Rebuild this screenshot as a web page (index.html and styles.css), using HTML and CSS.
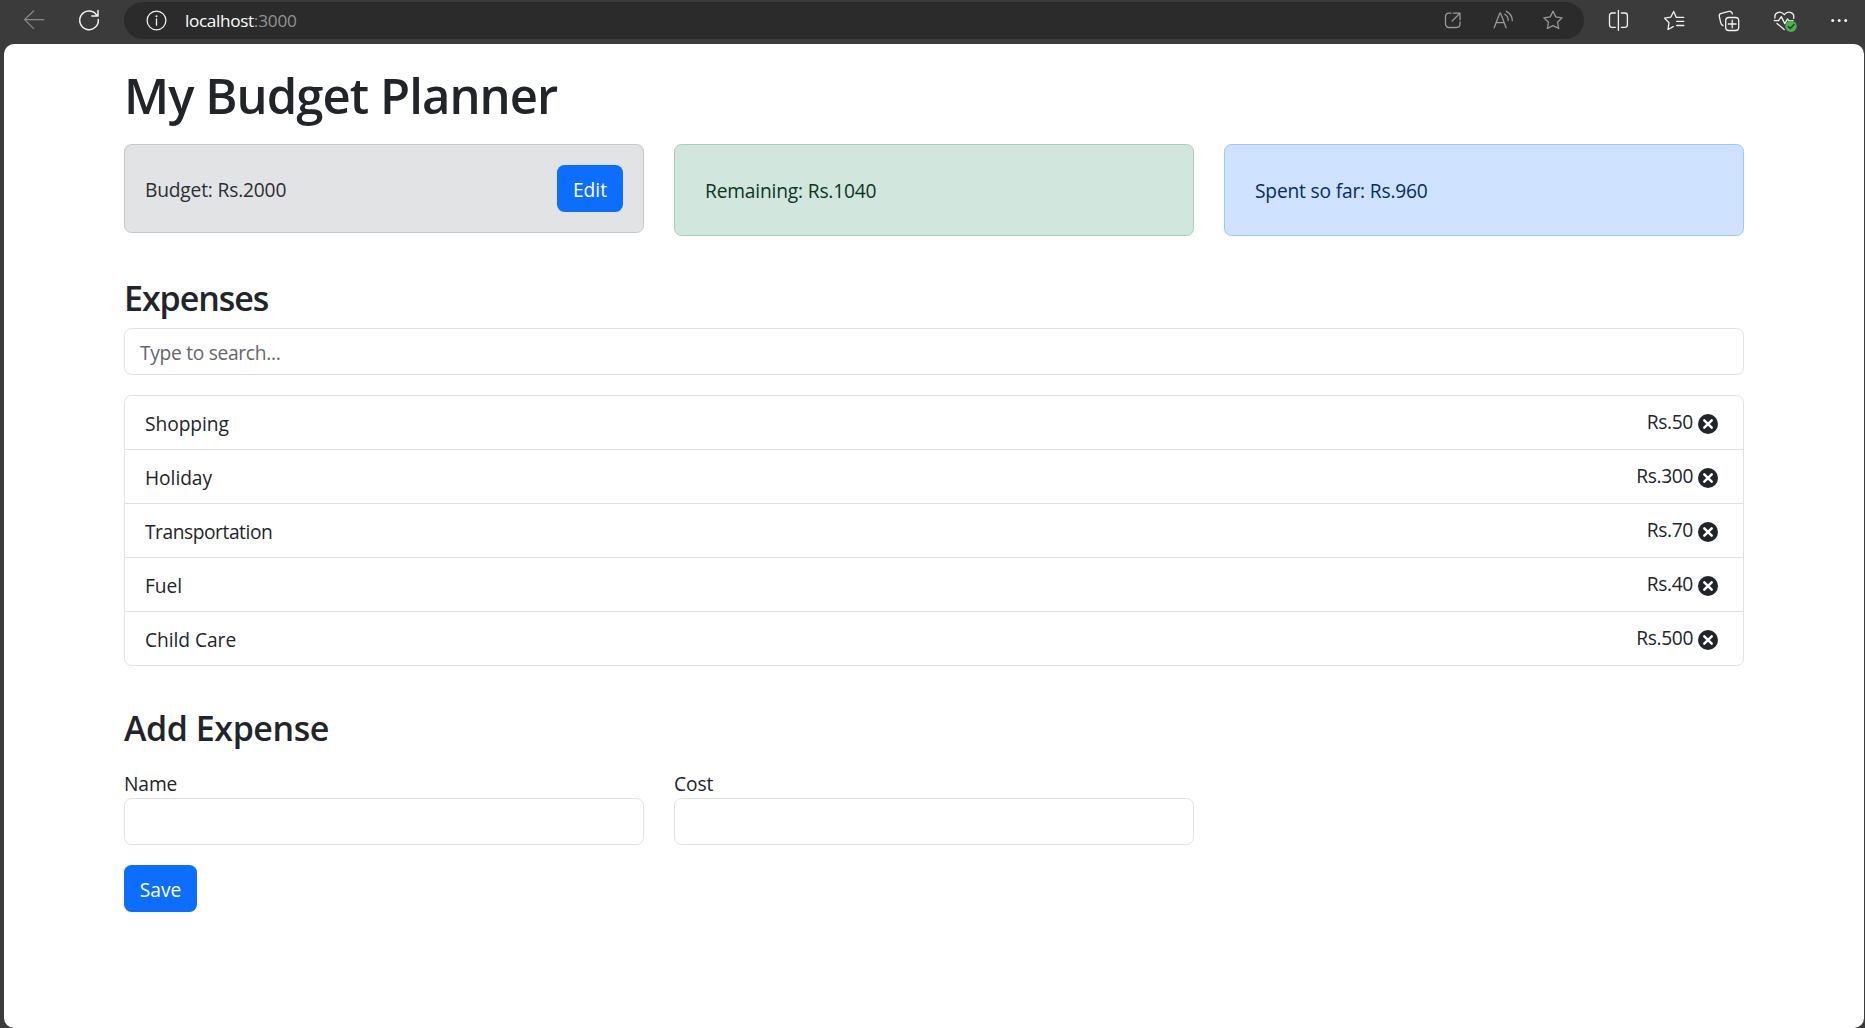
FILE: index.html
```html
<!DOCTYPE html>
<html lang="en">
<head>
<meta charset="utf-8">
<title>My Budget Planner</title>
<link rel="stylesheet" href="styles.css">
</head>
<body>
<svg class="defs" aria-hidden="true">
  <symbol id="remove" viewBox="0 0 20 20">
    <circle cx="10" cy="10" r="10" fill="#212529"/>
    <path d="M6.3 6.3 13.7 13.7M13.7 6.3 6.3 13.7" stroke="#fff" stroke-width="2.5" stroke-linecap="round"/>
  </symbol>
</svg>
<header class="toolbar">
  <svg class="icon back" viewBox="0 0 24 24"><path d="M21.8 11.6H2.6M11.5 3 2.6 11.6l8.9 8.8"/></svg>
  <svg class="icon refresh" viewBox="0 0 24 24"><path d="M21.3 11.4A9.3 9.3 0 1 1 19.2 6.4L20.7 8M21 2.4V8.1H14.8"/></svg>
  <div class="address">
    <svg class="icon info" viewBox="0 0 24 24"><circle cx="12.5" cy="12.5" r="9.4"/><path d="M12.5 11v6.2"/><circle class="dot" cx="12.5" cy="8.2" r="1"/></svg>
    <div class="url"><span class="host">localhost</span><span class="port">:3000</span></div>
    <div class="address-actions">
      <svg class="icon" viewBox="0 0 24 24"><path d="M10 5.1H8A3.4 3.4 0 0 0 4.5 8.5v7.6A3.4 3.4 0 0 0 7.9 19.5H15.6A3.4 3.4 0 0 0 19 16.1V14M12.3 5.1H19V11.8M19 5.1 11.2 13"/></svg>
      <svg class="icon" viewBox="0 0 24 24"><path d="M3.2 19.8 8.7 5.2h.9L15.1 19.8M5.3 14.6h7.7M13.7 6.3a7 7 0 0 1 3.5 6.2M15.3 3.3a10.7 10.7 0 0 1 6 9.2"/></svg>
      <svg class="icon" viewBox="0 0 24 24"><path d="M12 3.2 14.8 8.9 21.1 9.8 16.5 14.2 17.7 20.5 12 17.6 6.4 20.5 7.5 14.2 2.9 9.8 9.2 8.9Z"/></svg>
    </div>
  </div>
  <div class="tools">
    <svg class="icon" viewBox="0 0 24 24"><path d="M8.3 5H5A2.5 2.5 0 0 0 2.5 7.5v9.3A2.5 2.5 0 0 0 5 19.3h3.3M14.3 5h3.6a2.5 2.5 0 0 1 2.5 2.5v9.3a2.5 2.5 0 0 1-2.5 2.5h-3.6M11.4 2.3v20"/></svg>
    <svg class="icon" viewBox="0 0 24 24"><path d="M21.8 9.3H14.2L11.7 3.5 8.7 9.2 2.5 10.1 7 14.7 6 21.5 11.3 18.6M14.7 13.4h7.1M14.7 17.5h7.1"/></svg>
    <svg class="icon" viewBox="0 0 24 24"><path d="M6 17.7C4.5 17.1 4 16 3.7 14.7L2.3 8.5C2 6.7 2.7 5.7 4.2 5.3L12 3.4c1.8-.4 2.9.3 3.4 2.4"/><rect x="8.7" y="9.5" width="13" height="13" rx="3"/><path d="M15.2 12.2v7.6M11.4 16H19"/></svg>
    <svg class="icon health" viewBox="0 0 24 24"><path d="M1 10C-.2 4.5 6.4 2 10.3 6.7 14.2 2 21 4.5 19.6 10.3M.2 12.6h4.3l2.8-4 3.5 7 2.7-4.7 1.5 1.7H19M3 15.4l7.2 6.1"/><circle class="badge" cx="17" cy="18.3" r="5.7"/><path class="check" d="m14.2 18.5 2 2 3.8-3.9"/></svg>
    <svg class="icon more" viewBox="0 0 24 24"><circle class="dot" cx="5.7" cy="12.5" r="1.5"/><circle class="dot" cx="12.2" cy="12.5" r="1.5"/><circle class="dot" cx="18.7" cy="12.5" r="1.5"/></svg>
  </div>
</header>
<main class="page">
  <div class="container">
    <h1 class="title">My Budget Planner</h1>
    <section class="columns summary">
      <div class="alert alert-secondary"><span class="budget">Budget: Rs.2000</span><button class="btn edit" type="button">Edit</button></div>
      <div class="alert alert-success"><span>Remaining: Rs.1040</span></div>
      <div class="alert alert-primary"><span>Spent so far: Rs.960</span></div>
    </section>
    <h3 class="heading expenses-heading">Expenses</h3>
    <input class="field search" type="text" placeholder="Type to search...">
    <ul class="list">
      <li class="item"><span class="name">Shopping</span><span class="amount">Rs.50<svg class="remove"><use href="#remove"/></svg></span></li>
      <li class="item"><span class="name">Holiday</span><span class="amount">Rs.300<svg class="remove"><use href="#remove"/></svg></span></li>
      <li class="item"><span class="name tight">Transportation</span><span class="amount">Rs.70<svg class="remove"><use href="#remove"/></svg></span></li>
      <li class="item"><span class="name">Fuel</span><span class="amount">Rs.40<svg class="remove"><use href="#remove"/></svg></span></li>
      <li class="item"><span class="name">Child Care</span><span class="amount">Rs.500<svg class="remove"><use href="#remove"/></svg></span></li>
    </ul>
    <h3 class="heading add-heading">Add Expense</h3>
    <form class="form">
      <div class="columns">
        <div class="group"><label class="label" for="name">Name</label><input class="field" id="name" type="text"></div>
        <div class="group"><label class="label" for="cost">Cost</label><input class="field" id="cost" type="text"></div>
      </div>
      <button class="btn save" type="button">Save</button>
    </form>
  </div>
</main>
</body>
</html>
```
FILE: styles.css
```css
* { box-sizing: border-box; }

body {
  display: flex;
  flex-direction: column;
  height: 100vh;
  margin: 0;
  overflow: hidden;
  background: #3b3b3b;
  color: #212529;
  font: 400 19.2px/30px "Open Sans", "Noto Sans", sans-serif;
}

.defs { display: none; }

/* Browser toolbar */
.toolbar {
  display: flex;
  align-items: flex-start;
  flex: none;
  height: 44px;
  padding: 2px 14px 0 22px;
}

.icon {
  display: block;
  flex: none;
  width: 24px;
  height: 24px;
  margin-top: 6px;
  fill: none;
  stroke: #f2f2f2;
  stroke-width: 1.3;
  stroke-linejoin: round;
  stroke-linecap: round;
}

.icon .dot { fill: #f2f2f2; stroke: none; }
.back { stroke: #8a8a8a; }
.refresh { margin-left: 31px; stroke-width: 1.5; }

.address {
  display: flex;
  align-items: flex-start;
  width: 1460px;
  height: 37px;
  margin-left: 23px;
  padding: 0 19px 0 20px;
  border-radius: 19px;
  background: #2b2b2b;
}

.url {
  margin-left: 17px;
  padding-top: 4px;
  font-size: 17.2px;
  letter-spacing: -0.35px;
}

.host { color: #fff; }
.port { color: #929292; letter-spacing: -0.2px; }

.address-actions {
  display: flex;
  gap: 26px;
  margin-left: auto;
}

.address-actions .icon { stroke: #999; }

.tools {
  display: flex;
  gap: 31px;
  margin-left: 23px;
}

.health { margin-left: 2px; overflow: visible; }
.more { margin-left: -2px; }
.health .badge { fill: #4caf50; stroke: none; }
.health .check { stroke: #23402a; stroke-width: 1.5; }

/* Page */
.page {
  flex: 1;
  margin: 0 1px 0 4px;
  border-radius: 10px;
  background: #fff;
}

.container {
  width: 1620px;
  margin: 0 auto;
  padding-top: 20px;
}

.title {
  height: 60px;
  margin: 0 0 20px;
  font-size: 49px;
  font-weight: 580;
  line-height: 62px;
  letter-spacing: -0.95px;
}

.heading {
  height: 42px;
  font-size: 34px;
  font-weight: 560;
  line-height: 42px;
}

.columns {
  display: grid;
  grid-template-columns: repeat(3, 520px);
  gap: 30px;
  align-items: start;
}

.alert {
  padding: 31px 30px 29px;
  border: 1px solid;
  border-radius: 7.5px;
  letter-spacing: -0.18px;
}

.alert-secondary {
  display: flex;
  align-items: center;
  justify-content: space-between;
  padding: 20px;
  border-color: #c4c8cb;
  background: #e2e3e5;
  color: #2b2f32;
}

.budget { padding-top: 2px; }

.alert-success { border-color: #a3cfbb; background: #d1e7dd; color: #0a3622; }
.alert-primary { border-color: #9ec5fe; background: #cfe2ff; color: #052c65; }

.btn {
  height: 47px;
  padding: 2px 0 0;
  border: 0;
  border-radius: 7.5px;
  background: #0d6efd;
  color: #fff;
  font: inherit;
}

.edit { width: 66px; }
.save { width: 73px; margin-top: 20px; }

.expenses-heading {
  margin: 41px 0 9px;
  letter-spacing: -1.05px;
}

.field {
  display: block;
  width: 100%;
  height: 47px;
  padding: 2px 15px 0;
  border: 1px solid #dee2e6;
  border-radius: 7.5px;
  background: #fff;
  color: #212529;
  font: inherit;
}

.search { letter-spacing: -0.3px; }
.field::placeholder { color: #62676c; opacity: 1; }

.list {
  margin: 20px 0 0;
  padding: 0;
  border: 1px solid #dee2e6;
  border-radius: 7.5px;
  list-style: none;
}

.item {
  display: flex;
  align-items: flex-start;
  justify-content: space-between;
  height: 54px;
  padding: 11px 25px 0 20px;
}

.item + .item { border-top: 1px solid #dee2e6; }
.item:first-child { height: 53px; }
.name { padding-top: 2px; letter-spacing: -0.05px; }
.tight { letter-spacing: -0.45px; }

.amount {
  display: flex;
  letter-spacing: -0.35px;
}

.remove {
  width: 20px;
  height: 20px;
  margin: 7px 0 0 5px;
}

.add-heading {
  margin: 41px 0 0;
  letter-spacing: -0.45px;
}

.form { margin-top: 19px; }
.label { display: block; height: 30px; padding-top: 1px; letter-spacing: -0.1px; }
```
